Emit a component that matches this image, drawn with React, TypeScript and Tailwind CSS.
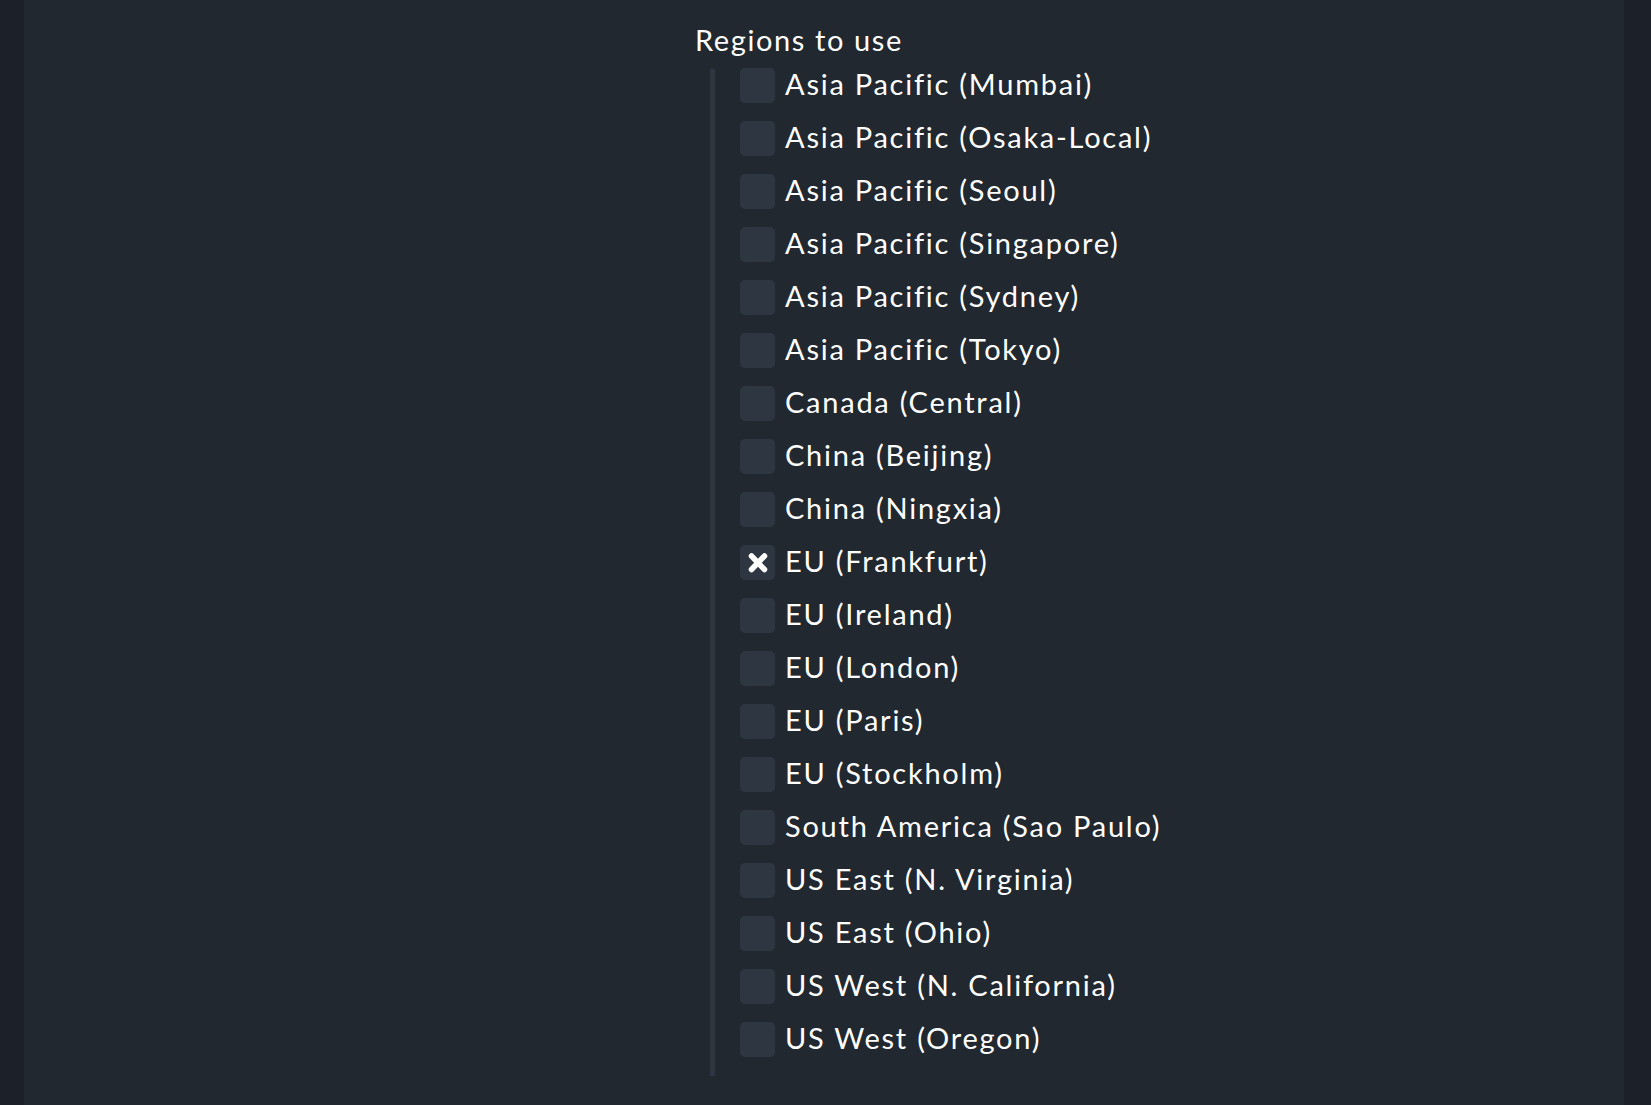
const regions: { name: string; checked?: boolean }[] = [
  { name: 'Asia Pacific (Mumbai)' },
  { name: 'Asia Pacific (Osaka-Local)' },
  { name: 'Asia Pacific (Seoul)' },
  { name: 'Asia Pacific (Singapore)' },
  { name: 'Asia Pacific (Sydney)' },
  { name: 'Asia Pacific (Tokyo)' },
  { name: 'Canada (Central)' },
  { name: 'China (Beijing)' },
  { name: 'China (Ningxia)' },
  { name: 'EU (Frankfurt)', checked: true },
  { name: 'EU (Ireland)' },
  { name: 'EU (London)' },
  { name: 'EU (Paris)' },
  { name: 'EU (Stockholm)' },
  { name: 'South America (Sao Paulo)' },
  { name: 'US East (N. Virginia)' },
  { name: 'US East (Ohio)' },
  { name: 'US West (N. California)' },
  { name: 'US West (Oregon)' },
];

function Checkbox({ checked }: { checked?: boolean }) {
  return (
    <span className="flex h-[35px] w-[35px] shrink-0 items-center justify-center rounded-[5px] bg-[#2e3641]">
      {checked && (
        <svg width="24" height="22" viewBox="0 0 24 22">
          <path
            d="M5.5 4 L18.5 17.5 M18.5 4 L5.5 17.5"
            stroke="#ffffff"
            strokeWidth="5.5"
            strokeLinecap="round"
          />
        </svg>
      )}
    </span>
  );
}

export default function App() {
  return (
    <div
      className="flex h-[1105px] w-full bg-[#212830] text-white"
      style={{ fontFamily: 'Lato, "Noto Sans", sans-serif' }}
    >
      <div className="w-[24px] shrink-0 bg-[#1c2129]" />
      <main className="flex-1 pl-[671px] pt-[21px]">
        <h2 className="text-[29px] leading-[38px] tracking-[1.6px]">Regions to use</h2>
        <div className="ml-[15px] mt-[10px] border-l-[5px] border-[#2e3641] pl-[25px]">
          {regions.map((r) => (
            <label key={r.name} className="flex h-[53px] items-start">
              <div className="-mt-px flex h-[35px] items-center gap-[10px]">
                <Checkbox checked={r.checked} />
                <span className="pb-[4px] text-[29px] leading-none tracking-[1.75px]">{r.name}</span>
              </div>
            </label>
          ))}
        </div>
      </main>
      <div className="w-[27px] shrink-0 bg-[#1c2129]" />
    </div>
  );
}
